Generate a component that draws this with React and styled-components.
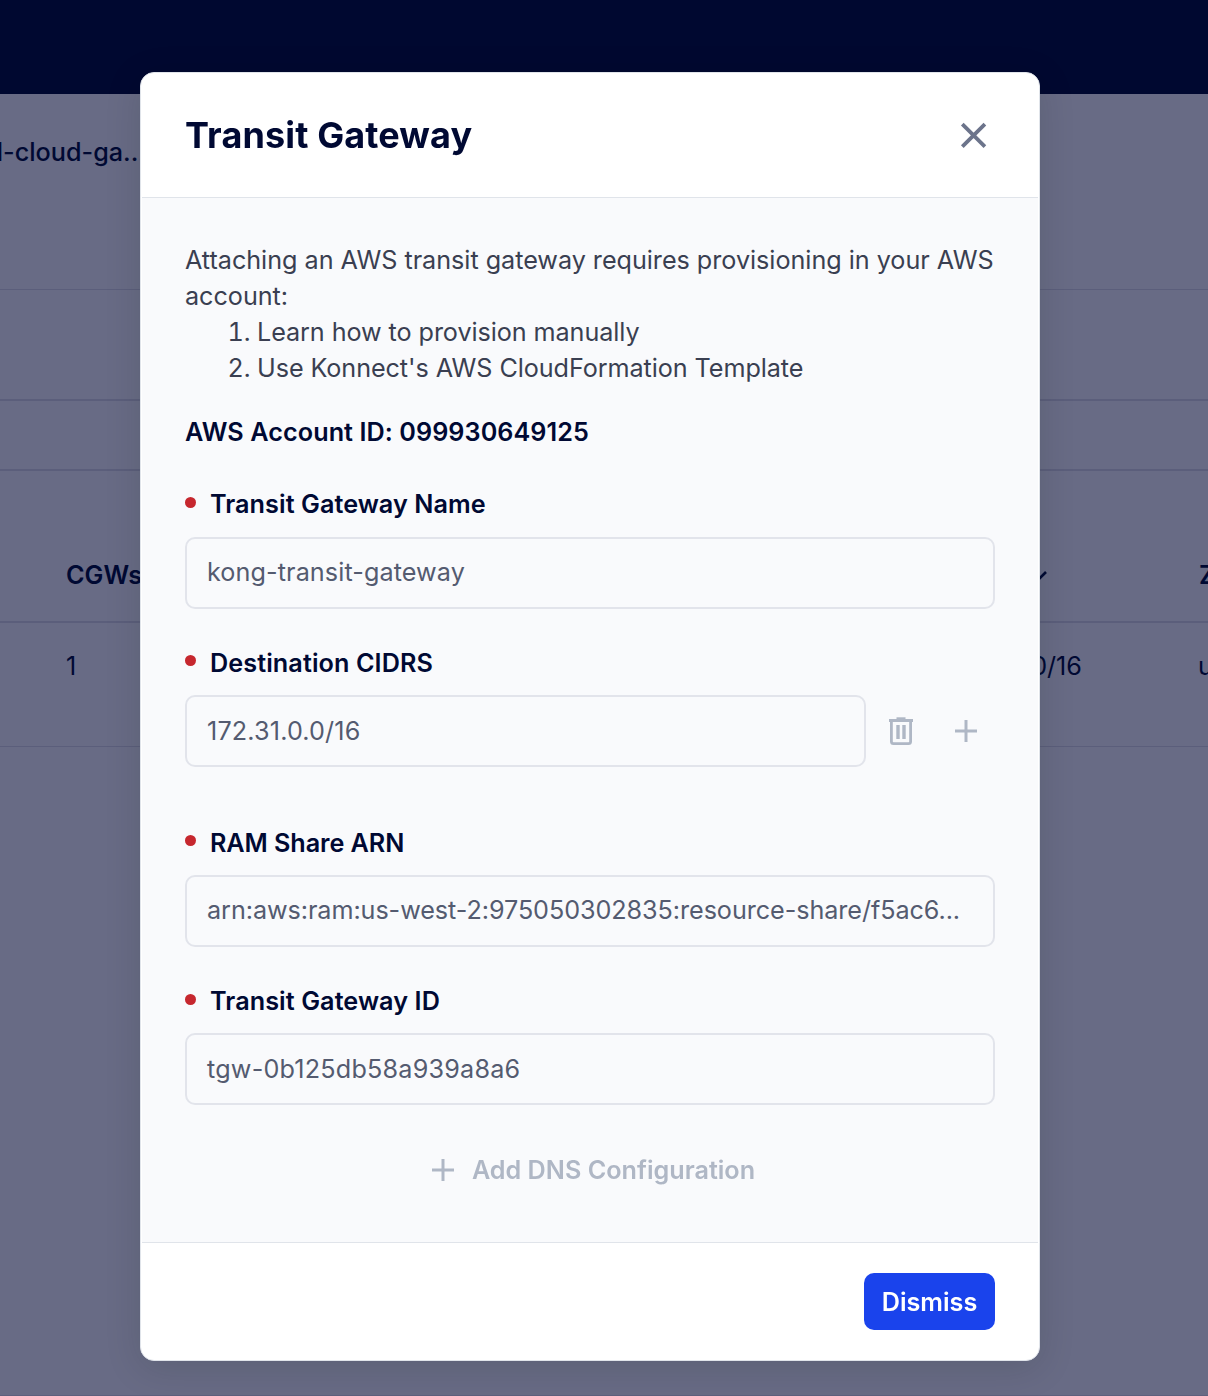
import React from "react";
import styled, { createGlobalStyle } from "styled-components";

const GlobalStyle = createGlobalStyle`
  *, *::before, *::after { box-sizing: border-box; }
  html, body { margin: 0; padding: 0; overflow: hidden; }
  body {
    background: #686b85;
    color: #000933;
    font-family: Inter, "Liberation Sans", sans-serif;
    font-size: 25.2px;
    line-height: 36px;
  }
`;

const Page = styled.div`
  display: flex;
  flex-direction: column;
  height: 1396px;
  width: 1208px;
  overflow: hidden;
  border-bottom: 1px solid #5e607d;
`;

const TopBar = styled.div`
  flex: none;
  height: 94px;
  background: #000830;
`;

const Band = styled.div`
  flex: none;
  display: flex;
  align-items: flex-start;
  height: ${(p) => p.$height}px;
  padding-top: ${(p) => p.$top || 0}px;
  border-bottom: ${(p) => p.$line || 1}px solid #5b5e7b;
  font-weight: ${(p) => p.$weight || 400};
  white-space: nowrap;
`;

const Cell = styled.div`
  flex: none;
  display: flex;
  align-items: center;
  width: ${(p) => p.$width}px;
  padding-left: ${(p) => p.$inset || 0}px;
  padding-top: ${(p) => p.$drop || 0}px;
  justify-content: ${(p) => (p.$end ? "flex-end" : "flex-start")};
  letter-spacing: ${(p) => p.$spacing || 0}px;
`;

const Overlay = styled.div`
  position: fixed;
  inset: 0;
  display: flex;
  align-items: flex-start;
  padding: 72px 0 0 140px;
`;

const Dialog = styled.section`
  display: flex;
  flex-direction: column;
  width: 900px;
  height: 1289px;
  background: #fff;
  border: 1px solid #e0e4ea;
  border-radius: 14px;
  box-shadow: 0 7px 36px rgba(0, 25, 0, 0.13);
`;

const Header = styled.header`
  flex: none;
  display: flex;
  align-items: center;
  justify-content: space-between;
  height: 124px;
  padding: 0 49px 0 44px;
`;

const Title = styled.h2`
  margin: 0;
  font-size: 36px;
  line-height: 44px;
  font-weight: 700;
  letter-spacing: 0.13px;
`;

const IconButton = styled.button`
  display: flex;
  align-items: center;
  justify-content: center;
  width: ${(p) => p.$size}px;
  height: ${(p) => p.$size}px;
  padding: 0;
  border: 0;
  background: none;
  color: ${(p) => p.$color || "#afb7c5"};
`;

const Body = styled.div`
  flex: none;
  display: flex;
  flex-direction: column;
  height: 1046px;
  margin: 0 1px;
  padding: 44px 44px 0 43px;
  background: #f9fafc;
  border: solid #e0e4ea;
  border-width: 1px 0;
`;

const Intro = styled.div`
  color: #3a3f51;
  white-space: nowrap;
  letter-spacing: -0.03px;
`;

const Steps = styled.ol`
  margin: 0;
  padding: 0 0 0 72px;
  letter-spacing: -0.08px;
`;

const Account = styled.div`
  margin-top: 28px;
  font-weight: 600;
  letter-spacing: 0.07px;
`;

const Field = styled.div`
  display: flex;
  flex-direction: column;
  margin-top: ${(p) => p.$gap}px;
`;

const Label = styled.label`
  display: flex;
  align-items: center;
  gap: 14px;
  height: 36px;
  font-weight: 600;
  white-space: nowrap;
  letter-spacing: ${(p) => p.$spacing || 0}px;

  &::before {
    content: "";
    width: 11px;
    height: 11px;
    margin-top: ${(p) => (p.$raised ? -5 : -3)}px;
    border-radius: 50%;
    background: #c6272e;
  }
`;

const FieldRow = styled.div`
  display: flex;
  align-items: center;
  margin-top: ${(p) => p.$gap || 14}px;
`;

const Input = styled.div`
  flex: none;
  display: flex;
  align-items: center;
  width: ${(p) => p.$width || 810}px;
  height: 72px;
  padding: 0 20px ${(p) => (p.$low ? 0 : 2)}px;
  border: 2px solid #e2e4eb;
  border-radius: 10px;
  color: #545b70;
  white-space: nowrap;
  letter-spacing: ${(p) => p.$spacing || 0}px;
`;

const Actions = styled.div`
  display: flex;
  gap: 29px;
  margin-left: 17px;
`;

const AddButton = styled.button`
  display: flex;
  align-items: center;
  align-self: center;
  gap: 11px;
  height: 36px;
  margin: 47px 0 0 1px;
  padding: 0;
  border: 0;
  background: none;
  color: #afb7c5;
  font: inherit;
  font-weight: 600;
  white-space: nowrap;
`;

const Footer = styled.footer`
  flex: 1;
  display: flex;
  justify-content: flex-end;
  align-items: flex-start;
  padding: 30px 44px 0 0;
`;

const Primary = styled.button`
  width: 131px;
  height: 57px;
  padding: 0;
  border: 0;
  border-radius: 10px;
  background: #1a43ec;
  color: #fff;
  font: inherit;
  font-weight: 600;
`;

const CloseIcon = () => (
  <svg width="28" height="28" viewBox="0 0 28 28" fill="none" stroke="currentColor" strokeWidth="3.8">
    <path d="M2.3 3.1L24.9 25.7M24.9 3.1L2.3 25.7" />
  </svg>
);

const PlusIcon = () => (
  <svg width="36" height="36" viewBox="0 0 36 36" fill="none" stroke="currentColor" strokeWidth="3">
    <path d="M18 7V29M7 18H29" />
  </svg>
);

const TrashIcon = () => (
  <svg width="36" height="36" viewBox="0 0 36 36" fill="none" stroke="currentColor">
    <path d="M6 7.5H30" strokeWidth="3" />
    <path d="M13.5 5.3H22.5" strokeWidth="2" />
    <path d="M8.4 8V28.5Q8.4 30.6 10.5 30.6H25.5Q27.6 30.6 27.6 28.5V8" strokeWidth="2.8" />
    <path d="M15 12V26M21 12V26" strokeWidth="3.4" />
  </svg>
);

const ChevronIcon = () => (
  <svg width="18" height="12" viewBox="0 0 18 12" fill="none" stroke="currentColor" strokeWidth="2.6">
    <path d="M1 2L9 10L17 2" />
  </svg>
);

export default function App() {
  return (
    <>
      <GlobalStyle />
      <Page>
        <TopBar />
        <Band $height={196} $top={40} $weight={500}>
          <Cell $width={146} $end>d-cloud-ga...</Cell>
        </Band>
        <Band $height={111} $line={2} />
        <Band $height={70} $line={2} />
        <Band $height={152} $top={86} $line={2} $weight={600}>
          <Cell $width={1029} $inset={66}>CGWs</Cell>
          <Cell $width={170} $drop={13}><ChevronIcon /></Cell>
          <Cell $width={60}>Zones</Cell>
        </Band>
        <Band $height={124} $top={25}>
          <Cell $width={160} $inset={66}>1</Cell>
          <Cell $width={922} $end>10.0.0.0/16</Cell>
          <Cell $width={160} $inset={116}>us-west</Cell>
        </Band>
      </Page>
      <Overlay>
        <Dialog role="dialog" aria-label="Transit Gateway">
          <Header>
            <Title>Transit Gateway</Title>
            <IconButton $size={32} $color="#6c748b" aria-label="Close"><CloseIcon /></IconButton>
          </Header>
          <Body>
            <Intro>
              Attaching an AWS transit gateway requires provisioning in your AWS
              <br />
              account:
              <Steps>
                <li>Learn how to provision manually</li>
                <li>Use Konnect's AWS CloudFormation Template</li>
              </Steps>
            </Intro>
            <Account>AWS Account ID: 099930649125</Account>
            <Field $gap={36}>
              <Label $spacing={0.06}>Transit Gateway Name</Label>
              <FieldRow $gap={15}><Input $spacing={0.09}>kong-transit-gateway</Input></FieldRow>
            </Field>
            <Field $gap={36}>
              <Label $spacing={0.09} $raised>Destination CIDRS</Label>
              <FieldRow>
                <Input $width={681} $spacing={0.15} $low>172.31.0.0/16</Input>
                <Actions>
                  <IconButton $size={36} aria-label="Delete"><TrashIcon /></IconButton>
                  <IconButton $size={36} aria-label="Add"><PlusIcon /></IconButton>
                </Actions>
              </FieldRow>
            </Field>
            <Field $gap={58}>
              <Label $spacing={-0.07} $raised>RAM Share ARN</Label>
              <FieldRow><Input $spacing={-0.07}>arn:aws:ram:us-west-2:975050302835:resource-share/f5ac6...</Input></FieldRow>
            </Field>
            <Field $gap={36}>
              <Label $spacing={0.08}>Transit Gateway ID</Label>
              <FieldRow><Input $spacing={0.2} $low>tgw-0b125db58a939a8a6</Input></FieldRow>
            </Field>
            <AddButton><PlusIcon />Add DNS Configuration</AddButton>
          </Body>
          <Footer>
            <Primary>Dismiss</Primary>
          </Footer>
        </Dialog>
      </Overlay>
    </>
  );
}
